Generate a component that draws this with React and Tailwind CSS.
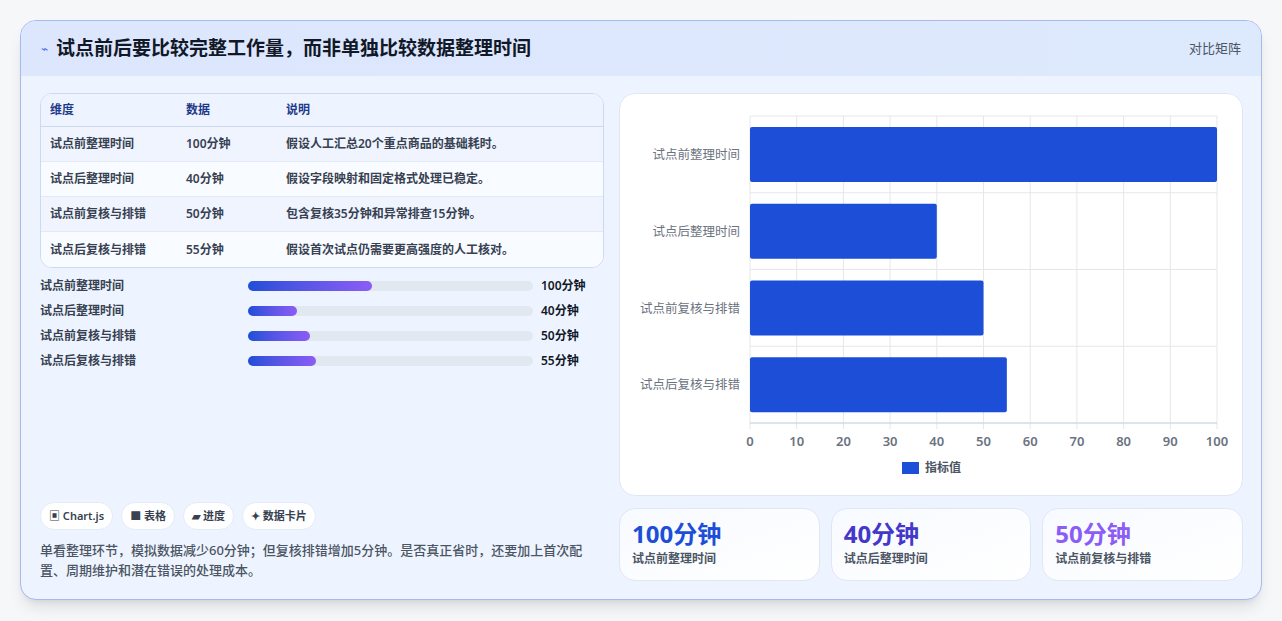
const rows = [
  ["试点前整理时间", "100分钟", "假设人工汇总20个重点商品的基础耗时。"],
  ["试点后整理时间", "40分钟", "假设字段映射和固定格式处理已稳定。"],
  ["试点前复核与排错", "50分钟", "包含复核35分钟和异常排查15分钟。"],
  ["试点后复核与排错", "55分钟", "假设首次试点仍需要更高强度的人工核对。"],
];
const bars = [
  ["试点前整理时间", 124, "100分钟"],
  ["试点后整理时间", 49, "40分钟"],
  ["试点前复核与排错", 62, "50分钟"],
  ["试点后复核与排错", 68, "55分钟"],
];
const vals = [100, 40, 50, 55];

function Chart() {
  const x0 = 130, x1 = 597, y0 = 22, y1 = 329;
  const sx = (v) => x0 + ((x1 - x0) * v) / 100;
  const rh = (y1 - y0) / 4;
  return (
    <svg width="623" height="402" className="block">
      {[0, 10, 20, 30, 40, 50, 60, 70, 80, 90, 100].map((t) => (
        <g key={t}>
          <line x1={sx(t)} x2={sx(t)} y1={y0} y2={y1 + 6} stroke="#e5e7eb" />
          <text x={sx(t)} y={352} textAnchor="middle" fontSize="13" fill="#6b7280" fontWeight="600">{t}</text>
        </g>
      ))}
      {[0, 1, 2, 3, 4].map((i) => (
        <line key={i} x1={x0} x2={x1} y1={y0 + i * rh} y2={y0 + i * rh} stroke="#e5e7eb" />
      ))}
      <line x1={x0} x2={x1} y1={y1} y2={y1} stroke="#cbd5e1" />
      {vals.map((v, i) => (
        <g key={i}>
          <rect x={x0} y={y0 + i * rh + 11} width={sx(v) - x0} height={55} fill="#1d4ed8" rx="2" />
          <text x={120} y={y0 + i * rh + 43} textAnchor="end" fontSize="12.5" fill="#6b7280">{bars[i][0]}</text>
        </g>
      ))}
      <rect x={282} y={368} width={17} height={12} fill="#1d4ed8" />
      <text x={305} y={378} fontSize="12" fill="#4b5563" fontWeight="600">指标值</text>
    </svg>
  );
}

export default function App() {
  return (
    <div className="min-h-screen bg-[#f6f7f9] p-5 pb-0" style={{ fontFamily: '"Noto Sans", "Noto Sans CJK SC", sans-serif' }}>
      <div className="h-[580px] rounded-2xl border border-[#aab8ee] bg-[#eef4ff] overflow-hidden shadow-lg flex flex-col">
        <div className="h-[55px] shrink-0 bg-gradient-to-r from-[#dce6fd] to-[#dde9fd] flex items-center justify-between px-5">
          <div className="flex items-center gap-2">
            <span className="text-[#4f6ef7] text-xs">⌁</span>
            <h1 className="text-[19px] font-bold text-[#111827]">试点前后要比较完整工作量，而非单独比较数据整理时间</h1>
          </div>
          <span className="text-[13px] text-[#4b5563]">对比矩阵</span>
        </div>
        <div className="flex-1 flex gap-[15px] pl-[19px] pr-[18px] pt-[17px]">
          <div className="w-[565px] flex flex-col">
            <div className="rounded-xl border border-[#cdd9ee] overflow-hidden bg-white text-[12px]">
              <div className="flex h-[33px] items-center bg-[#eef4ff] border-b border-[#cdd9ee] font-semibold text-[#1e3a8a]">
                <div className="w-[145px] pl-[9px]">维度</div><div className="w-[100px]">数据</div><div>说明</div>
              </div>
              {rows.map((r, i) => (
                <div key={i} className={`flex h-[35px] items-center font-semibold text-[#374151] ${i < 3 ? "border-b border-[#e3eaf5]" : ""} ${i % 2 ? "bg-[#f8fbff]" : "bg-[#eff4ff]"}`}>
                  <div className="w-[145px] pl-[9px]">{r[0]}</div><div className="w-[100px]">{r[1]}</div><div>{r[2]}</div>
                </div>
              ))}
            </div>
            <div className="mt-[9px] flex flex-col gap-[7px]">
              {bars.map((b, i) => (
                <div key={i} className="flex items-center h-[18px] text-[12px] font-semibold text-[#374151]">
                  <div className="w-[208px]">{b[0]}</div>
                  <div className="w-[285px] h-[10px] rounded-full bg-[#e2e8f0]">
                    <div className="h-full rounded-full bg-gradient-to-r from-[#1d4ed8] to-[#8b5cf6]" style={{ width: b[1] }} />
                  </div>
                  <div className="ml-2 text-[#111827]">{b[2]}</div>
                </div>
              ))}
            </div>
            <div className="mt-auto pb-[19px]">
              <div className="flex gap-2 text-[11px] font-semibold text-[#374151]">
                {["▣ Chart.js", "■ 表格", "▰ 进度", "✦ 数据卡片"].map((c) => (
                  <span key={c} className="h-[28px] px-2 flex items-center rounded-full bg-white border border-[#e5ebf5]">{c}</span>
                ))}
              </div>
              <p className="mt-[10px] text-[13px] leading-[20px] text-[#4b5563] font-medium">单看整理环节，模拟数据减少60分钟；但复核排错增加5分钟。是否真正省时，还要加上首次配置、周期维护和潜在错误的处理成本。</p>
            </div>
          </div>
          <div className="w-[624px] flex flex-col">
            <div className="h-[403px] rounded-2xl bg-white border border-[#dfe7f5]"><Chart /></div>
            <div className="mt-[12px] grid grid-cols-3 gap-[11px]">
              {[["100分钟", "text-[#1d4ed8]", "试点前整理时间"], ["40分钟", "text-[#4338ca]", "试点后整理时间"], ["50分钟", "text-[#8b5cf6]", "试点前复核与排错"]].map((s) => (
                <div key={s[0]} className="h-[73px] rounded-2xl bg-gradient-to-br from-[#f7faff] to-white border border-[#dfe7f5] px-[12px] pt-[9px]">
                  <div className={`text-[24px] leading-[32px] font-bold ${s[1]}`}>{s[0]}</div>
                  <div className="text-[12px] font-semibold text-[#4b5563]">{s[2]}</div>
                </div>
              ))}
            </div>
          </div>
        </div>
      </div>
    </div>
  );
}
